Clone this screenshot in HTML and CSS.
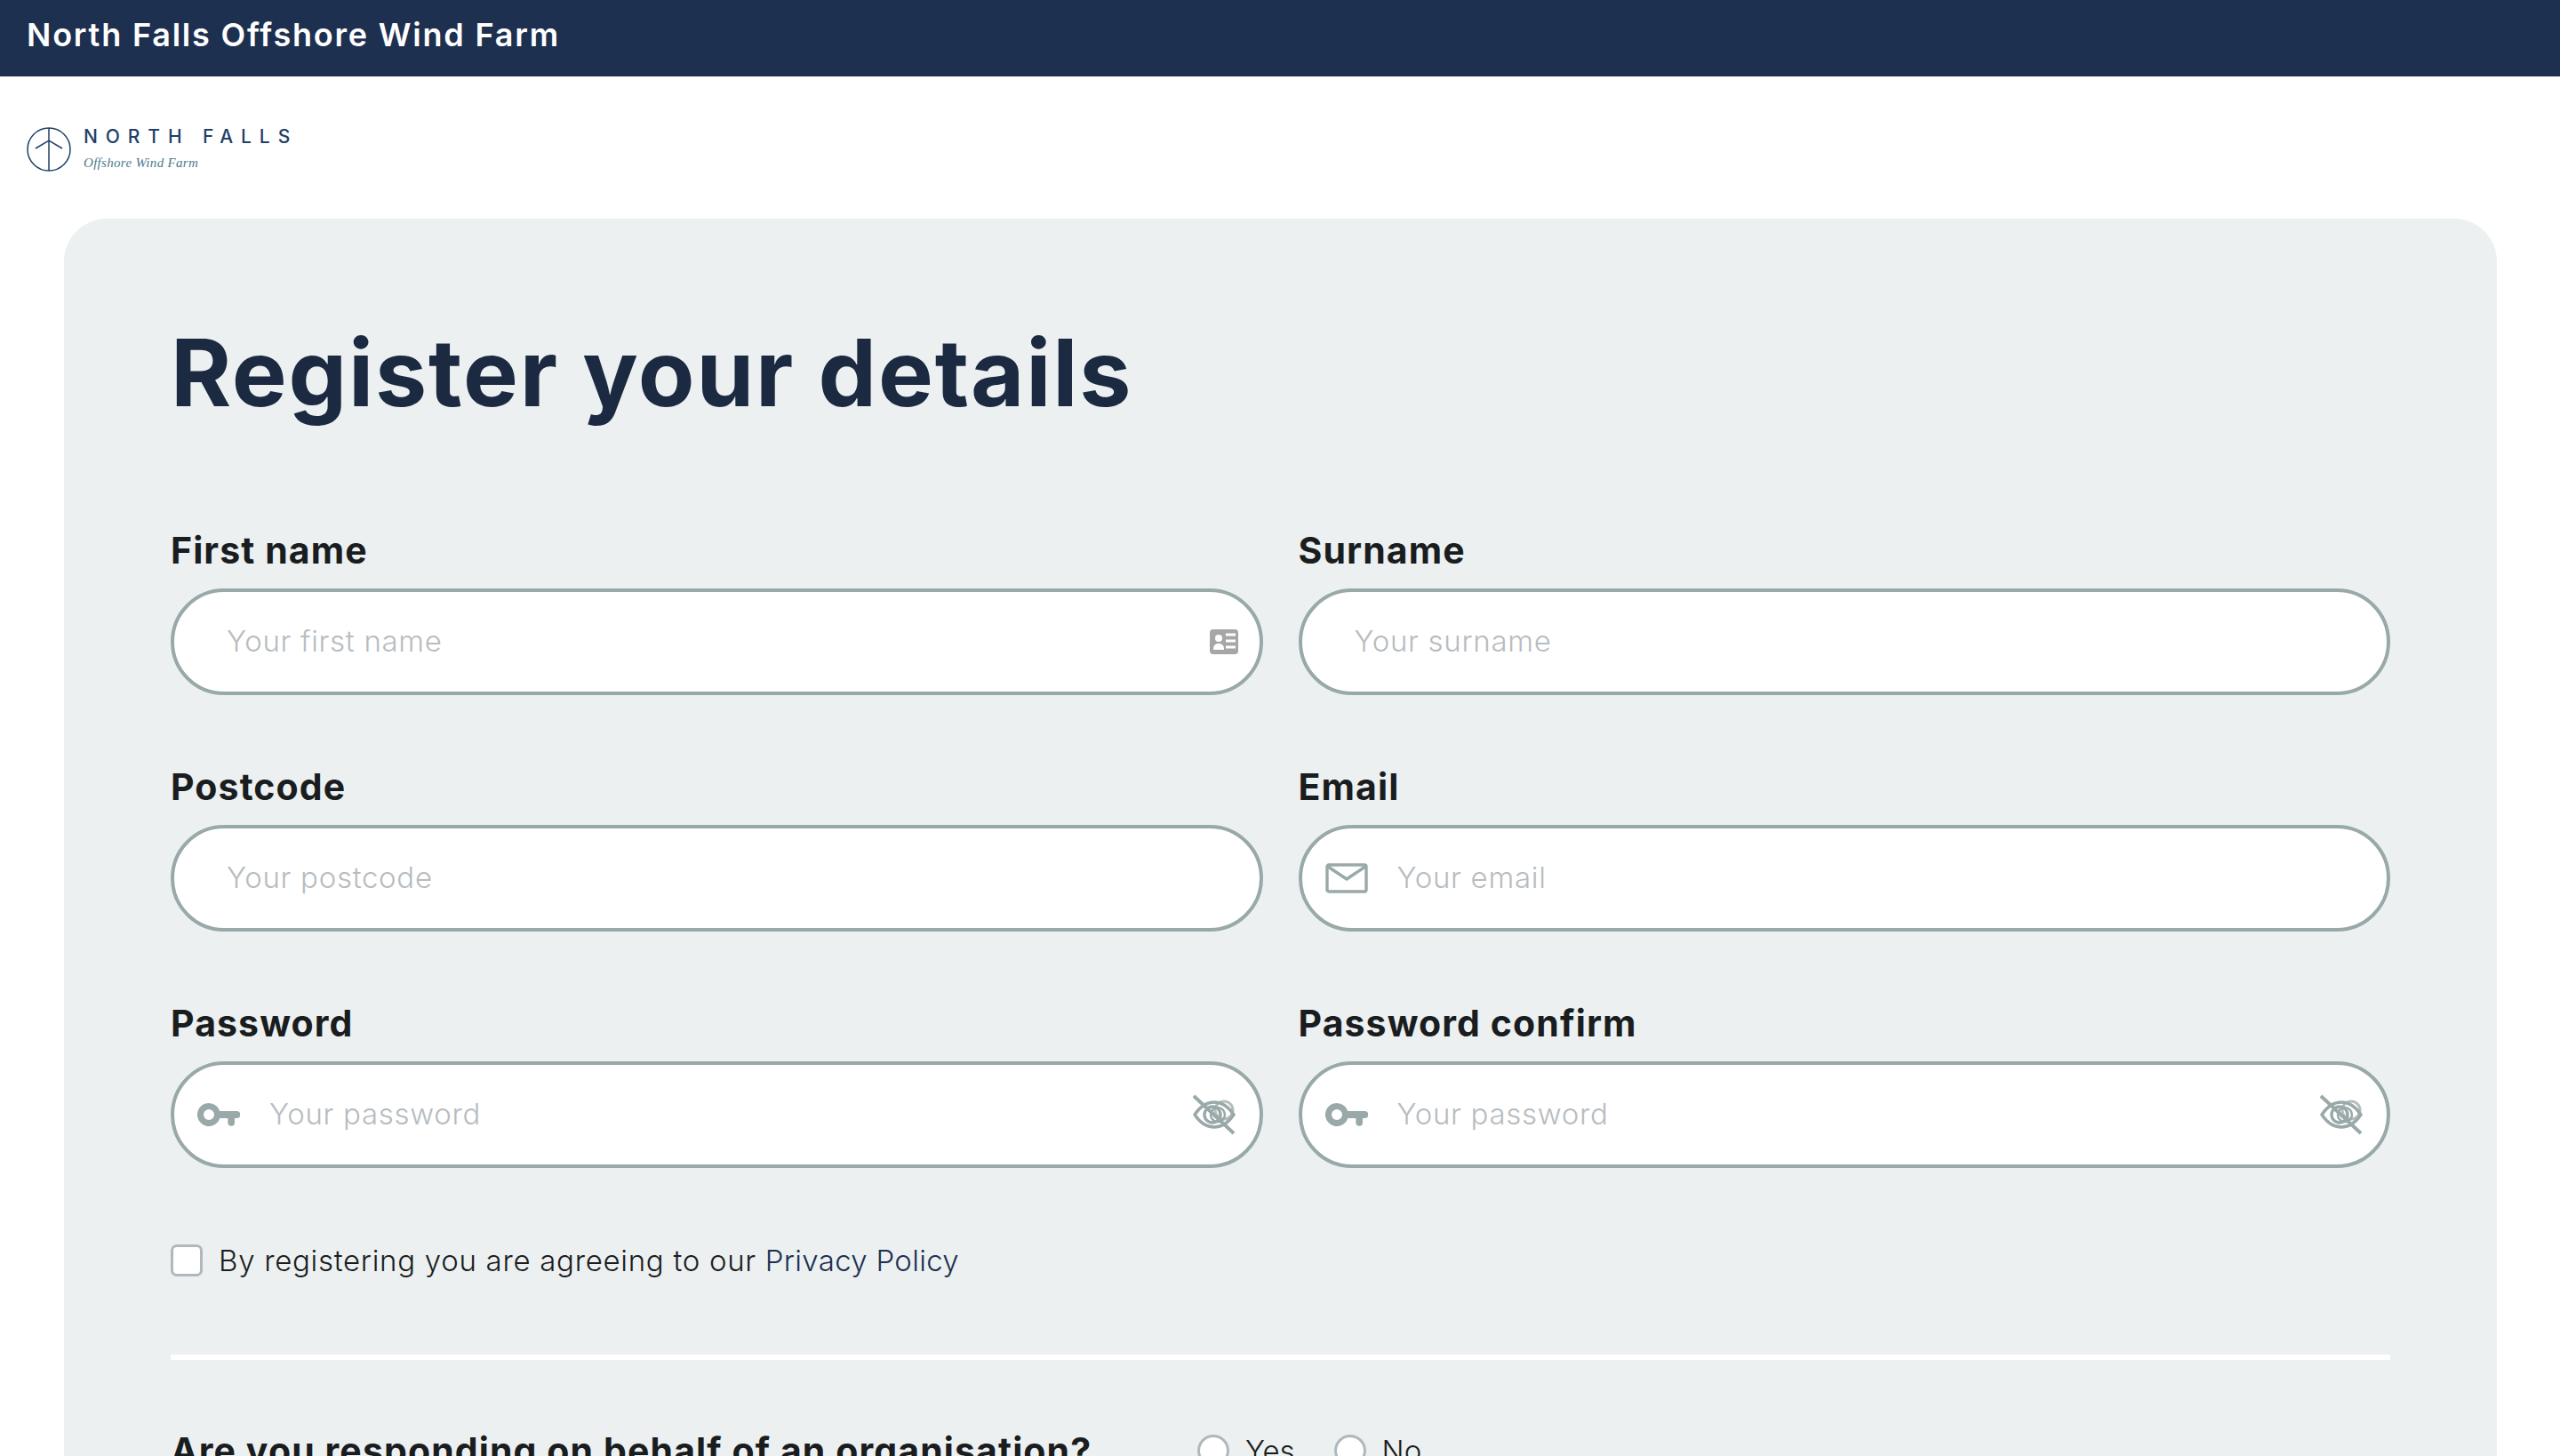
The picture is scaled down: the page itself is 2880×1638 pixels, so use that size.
FILE: index.html
```html
<!DOCTYPE html>
<html lang="en">
<head>
<meta charset="utf-8">
<title>Register your details</title>
<link rel="stylesheet" href="styles.css">
</head>
<body>
<header class="topbar">North Falls Offshore Wind Farm</header>
<div class="logo-row">
  <svg class="logo-mark" viewBox="0 0 50 50" width="50" height="50" fill="none" stroke="#1f4068" stroke-width="1.5"><circle cx="25" cy="25" r="24"/><path d="M25 1V49M10 24L25 15L40 24"/></svg>
  <div class="logo-text"><div class="logo-name">NORTH FALLS</div><div class="logo-sub">Offshore Wind Farm</div></div>
</div>
<main class="card">
  <h1 class="title">Register your details</h1>
  <form class="grid">
    <div class="field"><label class="label">First name</label>
      <div class="input"><span class="ph">Your first name</span>
        <svg class="icon icon-end" viewBox="0 0 32 28" width="32" height="28"><rect width="32" height="28" rx="4" fill="#a6a6a6"/><circle cx="10" cy="10" r="4" fill="#fff"/><path d="M4 23c0-5 2-7 6-7s6 2 6 7z" fill="#fff"/><path d="M18 6h11M18 13h11M18 20h11" stroke="#fff" stroke-width="3"/></svg>
      </div></div>
    <div class="field"><label class="label">Surname</label>
      <div class="input"><span class="ph">Your surname</span></div></div>
    <div class="field"><label class="label">Postcode</label>
      <div class="input"><span class="ph">Your postcode</span></div></div>
    <div class="field"><label class="label">Email</label>
      <div class="input has-start">
        <svg class="icon" viewBox="0 0 48 34" width="48" height="34" fill="none" stroke="#99a8a8" stroke-width="3.4" stroke-linejoin="round"><rect x="2" y="2" width="44" height="30" rx="2"/><path d="M3 4L24 18L45 4"/></svg>
        <span class="ph">Your email</span></div></div>
    <div class="field"><label class="label">Password</label>
      <div class="input has-start">
        <svg class="icon" viewBox="0 0 48 26" width="48" height="26"><use href="#key"/></svg>
        <span class="ph">Your password</span>
        <svg class="icon icon-end eye" viewBox="0 0 48 46" width="48" height="46"><use href="#eye"/></svg>
      </div></div>
    <div class="field"><label class="label">Password confirm</label>
      <div class="input has-start">
        <svg class="icon" viewBox="0 0 48 26" width="48" height="26"><use href="#key"/></svg>
        <span class="ph">Your password</span>
        <svg class="icon icon-end eye" viewBox="0 0 48 46" width="48" height="46"><use href="#eye"/></svg>
      </div></div>
  </form>
  <div class="agree"><span class="checkbox"></span><span>By registering you are agreeing to our <a class="link">Privacy Policy</a></span></div>
  <hr class="rule">
  <div class="question"><span class="q-text">Are you responding on behalf of an organisation?</span>
    <span class="opt"><span class="radio"></span>Yes</span><span class="opt"><span class="radio"></span>No</span></div>
</main>
<svg class="defs" width="0" height="0">
  <defs>
    <g id="key"><path fill-rule="evenodd" fill="#99a8a8" d="M13 0a13 13 0 0 1 12.3 9H45a3.500 3.500 0 0 1 3 4 3.500 3.500 0 0 1-3 4h-3v5a3.800 3.800 0 0 1-7.600 0v-5h-9.100A13 13 0 1 1 13 0zm0 7a6 6 0 1 0 0 12 6 6 0 0 0 0-12z"/></g>
    <g id="eye" fill="none" stroke="#99a8a8" stroke-width="3.400"><circle cx="35" cy="18" r="10" stroke="#b8bcbc" stroke-width="3"/><path d="M2 23C8 14 16 9 24 9s16 5 22 14c-6 9-14 14-22 14S8 32 2 23z"/><circle cx="22" cy="23" r="9"/><circle cx="28" cy="23" r="8" stroke-width="2.500"/><path d="M1 2L46 44" stroke-width="4"/></g>
  </defs>
</svg>
</body>
</html>
```
FILE: styles.css
```css
html, body { margin: 0; height: 100%; overflow: hidden; background: #fff; }
body { font-family: Inter, "Open Sans", sans-serif; color: #1a1d20; }
.topbar { height: 86px; box-sizing: border-box; padding-left: 30px; background: #1d3050; color: #fff; font-size: 36px; font-weight: 600; line-height: 79px; letter-spacing: 1.800px; }
.logo-row { display: flex; align-items: flex-start; gap: 14px; height: 160px; box-sizing: border-box; padding: 56px 0 0 30px; }
.logo-mark { margin-top: 1px; }
.logo-name { font-size: 21px; line-height: 24px; font-weight: 500; letter-spacing: 8.900px; color: #1f4068; white-space: nowrap; }
.logo-sub { margin-top: 8px; font-family: "Liberation Serif", serif; font-style: italic; font-size: 15px; line-height: 18px; color: #4d7a8c; letter-spacing: .3px; }
.card { margin: 0 71px 0 72px; height: 1600px; box-sizing: border-box; padding: 112px 120px 0; background: #ecf0f1; border-radius: 48px; }
.title { margin: 0; font-size: 104px; line-height: 122px; font-weight: 700; color: #1b2a41; letter-spacing: 1.800px; }
.grid { display: grid; grid-template-columns: 1fr 1fr; column-gap: 40px; row-gap: 77px; margin-top: 113px; }
.field { display: flex; flex-direction: column; }
.label { font-size: 41px; line-height: 52px; font-weight: 700; color: #1a1d20; margin-bottom: 17px; letter-spacing: 1.100px; }
.input { display: flex; align-items: center; height: 120px; box-sizing: border-box; padding: 0 24px 0 59px; background: #fff; border: 4px solid #99a8a8; border-radius: 60px; }
.input.has-start { padding-left: 26px; }
.has-start .ph { margin-left: 33px; }
.ph { font-size: 33px; line-height: 38px; margin-top: -2px; font-weight: 300; color: #b7bcc0; letter-spacing: .7px; flex: 1; }
.icon { flex: none; display: block; }
.icon-end { margin-left: auto; }
.eye { margin-right: 3px; }
.agree { display: flex; align-items: center; gap: 18px; margin-top: 82px; font-size: 33px; line-height: 44px; font-weight: 300; letter-spacing: .7px; }
.checkbox { width: 36px; height: 36px; box-sizing: border-box; background: #fff; border: 3px solid #aeb8bd; border-radius: 7px; }
.link { color: #1d3050; font-weight: 300; letter-spacing: .3px; }
.rule { margin: 84px 0 0; height: 6px; border: 0; background: #fff; }
.question { display: flex; align-items: center; margin-top: 76px; height: 52px; }
.q-text { font-size: 41px; font-weight: 700; letter-spacing: 1.100px; width: 1155px; }
.opt { display: inline-flex; align-items: center; gap: 18px; margin-right: 44px; font-size: 33px; font-weight: 300; }
.radio { width: 36px; height: 36px; box-sizing: border-box; background: #fff; border: 3px solid #aeb8bd; border-radius: 50%; }
.defs { position: absolute; }
```
